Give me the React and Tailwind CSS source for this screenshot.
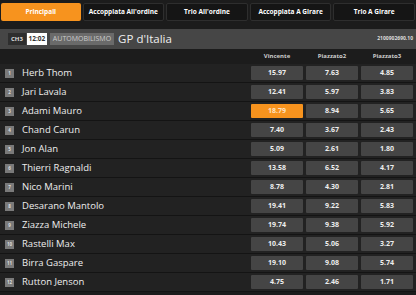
import React from 'react';

const tabs = ['Principali', "Accoppiata All'ordine", "Trio All'ordine", 'Accoppiata A Girare', 'Trio A Girare'];

const runners = [
    { n: 1, name: 'Herb Thom', odds: ['15.97', '7.63', '4.85'] },
    { n: 2, name: 'Jari Lavala', odds: ['12.41', '5.97', '3.83'] },
    { n: 3, name: 'Adami Mauro', odds: ['18.79', '8.94', '5.65'], hot: 0 },
    { n: 4, name: 'Chand Carun', odds: ['7.40', '3.67', '2.43'] },
    { n: 5, name: 'Jon Alan', odds: ['5.09', '2.61', '1.80'] },
    { n: 6, name: 'Thierri Ragnaldi', odds: ['13.58', '6.52', '4.17'] },
    { n: 7, name: 'Nico Marini', odds: ['8.78', '4.30', '2.81'] },
    { n: 8, name: 'Desarano Mantolo', odds: ['19.41', '9.22', '5.83'] },
    { n: 9, name: 'Ziazza Michele', odds: ['19.74', '9.38', '5.92'] },
    { n: 10, name: 'Rastelli Max', odds: ['10.43', '5.06', '3.27'] },
    { n: 11, name: 'Birra Gaspare', odds: ['19.10', '9.08', '5.74'] },
    { n: 12, name: 'Rutton Jenson', odds: ['4.75', '2.46', '1.71'] },
];

function App() {
    return (
        <div className="w-[416px] h-[295px] overflow-hidden bg-[#1c1c1c] text-white" style={{ fontFamily: '"Open Sans", sans-serif' }}>
            {/* Tabs */}
            <div className="flex gap-[2px] px-[1px] pt-[3px]">
                {tabs.map((t, i) => (
                    <div
                        key={t}
                        className={`flex-1 h-[18px] flex items-center justify-center rounded-[2px] text-[6.5px] font-bold ${i === 0 ? 'bg-[#f7931e]' : 'bg-[#151515] border border-[#2e2e2e]'}`}
                    >
                        {t}
                    </div>
                ))}
            </div>

            {/* Event header */}
            <div className="mt-[8px] h-[20px] bg-[#464646] flex items-center pl-[8px] pr-[3px]">
                <span className="h-[12px] px-[3px] flex items-center bg-[#2e2e2e] text-[6px] font-bold text-[#ddd]">CH3</span>
                <span className="ml-[1px] h-[12px] w-[20px] flex items-center justify-center bg-white text-[6.5px] font-bold text-[#333]">12:02</span>
                <span className="ml-[3px] h-[12px] px-[3px] flex items-center bg-[#6a6a6a] text-[7px] text-[#ccc]">AUTOMOBILISMO</span>
                <span className="ml-[4px] text-[11.5px] text-[#eee]">GP d'Italia</span>
                <span className="ml-auto text-[5px] font-bold text-[#ddd]">2100902690.10</span>
            </div>

            {/* Column headers */}
            <div className="flex h-[15px] items-center">
                <div className="flex-1" />
                <div className="flex gap-[3px] pr-[3px]">
                    {['Vincente', 'Piazzato2', 'Piazzato3'].map((c) => (
                        <div key={c} className="w-[52px] text-center text-[6px] font-bold text-[#ccc]">{c}</div>
                    ))}
                </div>
            </div>

            {/* Runners */}
            <div>
                {runners.map((r) => (
                    <div key={r.n} className="flex h-[19px] items-center border-b border-[#141414] bg-[#222]">
                        <div className="flex-1 flex items-center pl-[5px]">
                            <span className="w-[9px] h-[9px] flex items-center justify-center bg-[#7a7a7a] text-[4.5px] font-bold text-[#ddd]">{r.n}</span>
                            <span className="ml-[8px] text-[9.5px] text-[#eee]">{r.name}</span>
                        </div>
                        <div className="flex gap-[3px] pr-[3px]">
                            {r.odds.map((o, i) => (
                                <div
                                    key={i}
                                    className={`w-[52px] h-[14px] flex items-center justify-center rounded-[1px] text-[7px] font-bold ${r.hot === i ? 'bg-[#f7931e] text-[#fde3c4]' : 'bg-[#454545] text-[#eee]'}`}
                                >
                                    {o}
                                </div>
                            ))}
                        </div>
                    </div>
                ))}
            </div>
        </div>
    );
}

export default App;
